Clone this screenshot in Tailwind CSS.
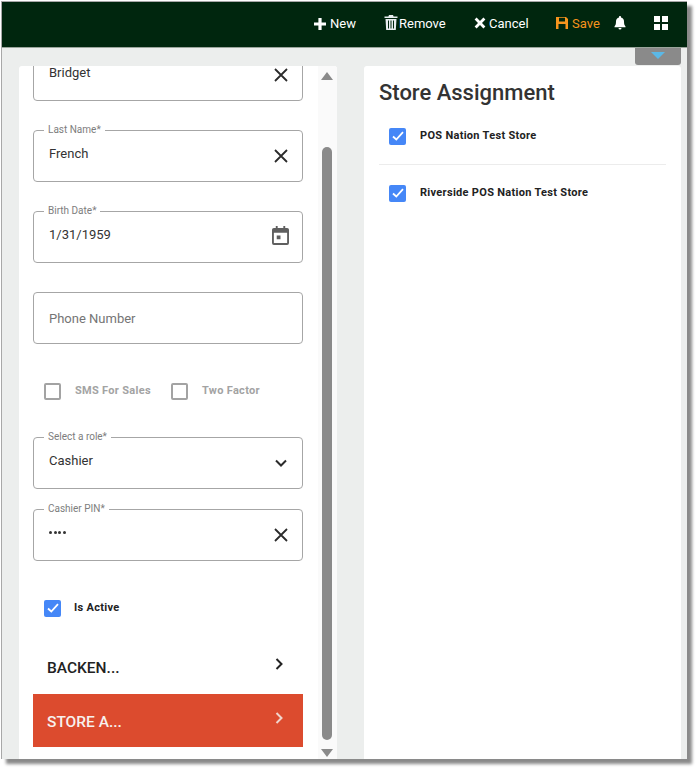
<!DOCTYPE html>
<html lang="en">
  <head>
    <meta charset="UTF-8" />
    <meta name="viewport" content="width=device-width, initial-scale=1.0" />
    <title>Employee - Store Assignment</title>
    <script src="https://cdn.jsdelivr.net/npm/@tailwindcss/browser@4"></script>
  </head>
  <body class="bg-white font-['Roboto',sans-serif] w-[700px] h-[772px] overflow-hidden">
    <div class="ml-[1px] mt-[1px] w-[686px] h-[758px] bg-[#eceeed] border-t border-l border-[#a8a8a8] shadow-[5px_5px_3px_#8a8a8a] flex flex-col overflow-hidden">
      <!-- Top bar -->
      <header class="h-[46px] shrink-0 bg-[#00260e] border-b border-[#9aa59c] pb-[2px] flex items-center text-white text-[13px]">
        <div class="ml-[311px] flex items-center gap-[3px] w-[71px]">
          <svg class="w-[14px] h-[14px]" viewBox="0 0 14 14" fill="white"><path d="M5.4 1h3.2v4.4H13v3.2H8.6V13H5.4V8.600H1V5.400h4.400z"/></svg>
          <span>New</span>
        </div>
        <div class="flex items-center gap-[1px] w-[90px]">
          <svg class="w-[14px] h-[15px] -mt-[2px]" viewBox="0 0 14 15" fill="#e8eef0"><path d="M5 0h4l.6 1.500H13.500V3H.5V1.500H4.400zM1.500 4h11l-.7 11H2.200zM4 5.500v8h1v-8zM6.500 5.500v8h1v-8zM9 5.500v8h1v-8z"/></svg>
          <span>Remove</span>
        </div>
        <div class="flex items-center gap-[3px] w-[81px]">
          <svg class="w-[12px] h-[12px] -mt-[2px]" viewBox="0 0 12 12" fill="white"><path d="M2.600.6 6 4l3.400-3.400 2 2L8 6l3.400 3.400-2 2L6 8l-3.400 3.400-2-2L4 6 .6 2.600z"/></svg>
          <span>Cancel</span>
        </div>
        <div class="flex items-center gap-[3px] w-[59px] text-[#f6941d]">
          <svg class="w-[14px] h-[14px] -mt-[2px]" viewBox="0 0 14 14" fill="#f6941d"><path fill-rule="evenodd" d="M1 1h10l2 2v10H1zM4 1.800v3.700h6V1.800zM3.500 8v5h7V8z"/></svg>
          <span>Save</span>
        </div>
        <svg class="w-[12px] h-[14px] -mt-[2px]" viewBox="0 0 12 14" fill="white"><path d="M6 0c.6 0 1 .4 1 1v.6c2 .5 3 2 3 4 0 3 .6 3.700 1.500 4.900v.7H.500v-.7C1.400 9.300 2 8.600 2 5.600c0-2 1-3.500 3-4V1c0-.6.400-1 1-1zM4.500 12h3a1.500 1.500 0 0 1-3 0z"/></svg>
        <div class="ml-[28px] -mt-[2px] grid grid-cols-2 gap-[2px]">
          <span class="w-[6px] h-[6px] bg-white"></span>
          <span class="w-[6px] h-[6px] bg-white"></span>
          <span class="w-[6px] h-[6px] bg-white"></span>
          <span class="w-[6px] h-[6px] bg-white"></span>
        </div>
      </header>

      <!-- Panel toggle tab -->
      <div class="relative h-0">
        <div class="absolute left-[633px] top-0 w-[46px] h-[17px] bg-[#8a8a8a] rounded-b-[3px] flex justify-center pt-[4px]">
          <div class="w-0 h-0 border-l-[7px] border-r-[7px] border-t-[7px] border-l-transparent border-r-transparent border-t-[#5bb8e6]"></div>
        </div>
      </div>

      <main class="flex-1 min-h-0 flex pt-[18px] pl-[17px] pr-[5px] gap-[27px]">
        <!-- Left form card -->
        <section class="w-[318px] bg-white rounded-t-[3px] flex overflow-hidden">
          <div class="w-[299px] shrink-0 pl-[14px] pr-[15px] overflow-hidden">
            <div class="relative h-[52px] -mt-[17px] border border-[#a6a6a6] rounded-[4px] mb-[29px]">
              <span class="absolute left-[15px] top-[17px] text-[13px] leading-[12px] text-[#333]">Bridget</span>
              <svg class="absolute right-[14px] top-[18px] w-[14px] h-[14px]" viewBox="0 0 14 14" stroke="#2b2b2b" stroke-width="1.800" fill="none"><path d="M1 1l12 12M13 1 1 13"/></svg>
            </div>

            <div class="relative h-[52px] border border-[#a6a6a6] rounded-[4px] mb-[29px]">
              <span class="absolute left-[10px] -top-[7px] bg-white px-[4px] text-[10px] leading-[12px] text-[#7d7d7d]">Last Name*</span>
              <span class="absolute left-[15px] top-[14px] text-[13px] leading-[17px] text-[#333]">French</span>
              <svg class="absolute right-[14px] top-[18px] w-[14px] h-[14px]" viewBox="0 0 14 14" stroke="#2b2b2b" stroke-width="1.800" fill="none"><path d="M1 1l12 12M13 1 1 13"/></svg>
            </div>

            <div class="relative h-[52px] border border-[#a6a6a6] rounded-[4px] mb-[29px]">
              <span class="absolute left-[10px] -top-[7px] bg-white px-[4px] text-[10px] leading-[12px] text-[#7d7d7d]">Birth Date*</span>
              <span class="absolute left-[15px] top-[14px] text-[13px] leading-[17px] text-[#333]">1/31/1959</span>
              <svg class="absolute right-[13px] top-[14px] w-[17px] h-[19px]" viewBox="0 0 18 20" fill="#5f5f5f"><path fill-rule="evenodd" d="M4 0h2v2h6V0h2v2h2a2 2 0 0 1 2 2v14a2 2 0 0 1-2 2H2a2 2 0 0 1-2-2V4a2 2 0 0 1 2-2h2zM2 7v11h14V7zM5 10h4v4H5z"/></svg>
            </div>

            <div class="relative h-[52px] border border-[#a6a6a6] rounded-[4px] flex items-center pl-[15px] pt-[2px] text-[13px] text-[#757575] mb-[39px]">Phone Number</div>

            <div class="flex items-center h-[16px] pl-[11px] text-[11px] font-bold tracking-[0.3px] text-[#a3a3a3] mb-[38px]">
              <span class="w-[17px] h-[17px] border-2 border-[#a3a3a3] rounded-[2px] mr-[14px]"></span>
              <span class="w-[96px]">SMS For Sales</span>
              <span class="w-[17px] h-[17px] border-2 border-[#a3a3a3] rounded-[2px] mr-[14px]"></span>
              <span>Two Factor</span>
            </div>

            <div class="relative h-[52px] border border-[#a6a6a6] rounded-[4px] mb-[20px]">
              <span class="absolute left-[10px] -top-[7px] bg-white px-[4px] text-[10px] leading-[12px] text-[#7d7d7d]">Select a role*</span>
              <span class="absolute left-[15px] top-[14px] text-[13px] leading-[17px] text-[#333]">Cashier</span>
              <svg class="absolute right-[15px] top-[21px] w-[12px] h-[8px]" viewBox="0 0 12 8" stroke="#2b2b2b" stroke-width="2" fill="none"><path d="M1 1.500 6 6.500 11 1.500"/></svg>
            </div>

            <div class="relative h-[52px] border border-[#a6a6a6] rounded-[4px] mb-[39px]">
              <span class="absolute left-[10px] -top-[7px] bg-white px-[4px] text-[10px] leading-[12px] text-[#7d7d7d]">Cashier PIN*</span>
              <div class="absolute left-[15px] top-[21px] flex gap-[1.500px]">
                <span class="w-[3px] h-[3px] rounded-full bg-[#333]"></span>
                <span class="w-[3px] h-[3px] rounded-full bg-[#333]"></span>
                <span class="w-[3px] h-[3px] rounded-full bg-[#333]"></span>
                <span class="w-[3px] h-[3px] rounded-full bg-[#333]"></span>
              </div>
              <svg class="absolute right-[14px] top-[18px] w-[14px] h-[14px]" viewBox="0 0 14 14" stroke="#2b2b2b" stroke-width="1.800" fill="none"><path d="M1 1l12 12M13 1 1 13"/></svg>
            </div>

            <div class="flex items-center h-[16px] pl-[11px] text-[11px] font-bold tracking-[0.3px] text-[#222] mb-[24px]">
              <span class="w-[17px] h-[17px] bg-[#4587f7] rounded-[2px] flex items-center justify-center mr-[13px]">
                <svg class="w-[12px] h-[10px]" viewBox="0 0 12 10" stroke="white" stroke-width="1.800" fill="none"><path d="M1 5.500 4.300 8.500 11 1.200"/></svg>
              </span>
              <span>Is Active</span>
            </div>

            <div class="h-[54px] pt-[4px] flex items-center justify-between pl-[14px] pr-[20px] text-[15.500px] font-medium text-[#222]">
              <span>BACKEN...</span>
              <svg class="w-[8px] h-[12px] -mt-[10px]" viewBox="0 0 8 12" stroke="#222" stroke-width="2" fill="none"><path d="M1.500 1 6.500 6 1.500 11"/></svg>
            </div>
            <div class="h-[53px] pt-[4px] bg-[#dc4b2e] flex items-center justify-between pl-[14px] pr-[20px] text-[15.500px] font-medium text-[#f7f1ee]">
              <span>STORE A...</span>
              <svg class="w-[8px] h-[12px] -mt-[10px]" viewBox="0 0 8 12" stroke="#f0d5cd" stroke-width="2" fill="none"><path d="M1.500 1 6.500 6 1.500 11"/></svg>
            </div>
          </div>

          <!-- Scrollbar -->
          <div class="w-[19px] shrink-0 bg-[#fafafa] pr-[2px] flex flex-col items-center relative">
            <div class="mt-[6px] w-0 h-0 border-l-[6.500px] border-r-[6.500px] border-b-[8px] border-l-transparent border-r-transparent border-b-[#8a8a8a]"></div>
            <div class="mt-[67px] w-[10px] h-[593px] bg-[#8a8a8a] rounded-[5px]"></div>
            <div class="mt-[9px] w-0 h-0 border-l-[6.500px] border-r-[6.500px] border-t-[8px] border-l-transparent border-r-transparent border-t-[#8a8a8a]"></div>
          </div>
        </section>

        <!-- Store assignment card -->
        <section class="w-[317px] bg-white rounded-t-[3px] px-[15px] pt-[13px]">
          <h2 class="text-[22px] leading-[27px] font-medium text-[#333] mb-[21px]">Store Assignment</h2>
          <div class="flex items-center h-[18px] pl-[10px] text-[11px] font-bold tracking-[0.3px] text-[#222]">
            <span class="w-[17px] h-[17px] bg-[#4587f7] rounded-[2px] flex items-center justify-center mr-[14px]">
              <svg class="w-[12px] h-[10px]" viewBox="0 0 12 10" stroke="white" stroke-width="1.800" fill="none"><path d="M1 5.500 4.300 8.500 11 1.200"/></svg>
            </span>
            <span>POS Nation Test Store</span>
          </div>
          <div class="h-[1px] bg-[#ececec] mt-[19px] mb-[19px]"></div>
          <div class="flex items-center h-[18px] pl-[10px] text-[11px] font-bold tracking-[0.3px] text-[#222]">
            <span class="w-[17px] h-[17px] bg-[#4587f7] rounded-[2px] flex items-center justify-center mr-[14px]">
              <svg class="w-[12px] h-[10px]" viewBox="0 0 12 10" stroke="white" stroke-width="1.800" fill="none"><path d="M1 5.500 4.300 8.500 11 1.200"/></svg>
            </span>
            <span>Riverside POS Nation Test Store</span>
          </div>
        </section>
      </main>
    </div>
  </body>
</html>
